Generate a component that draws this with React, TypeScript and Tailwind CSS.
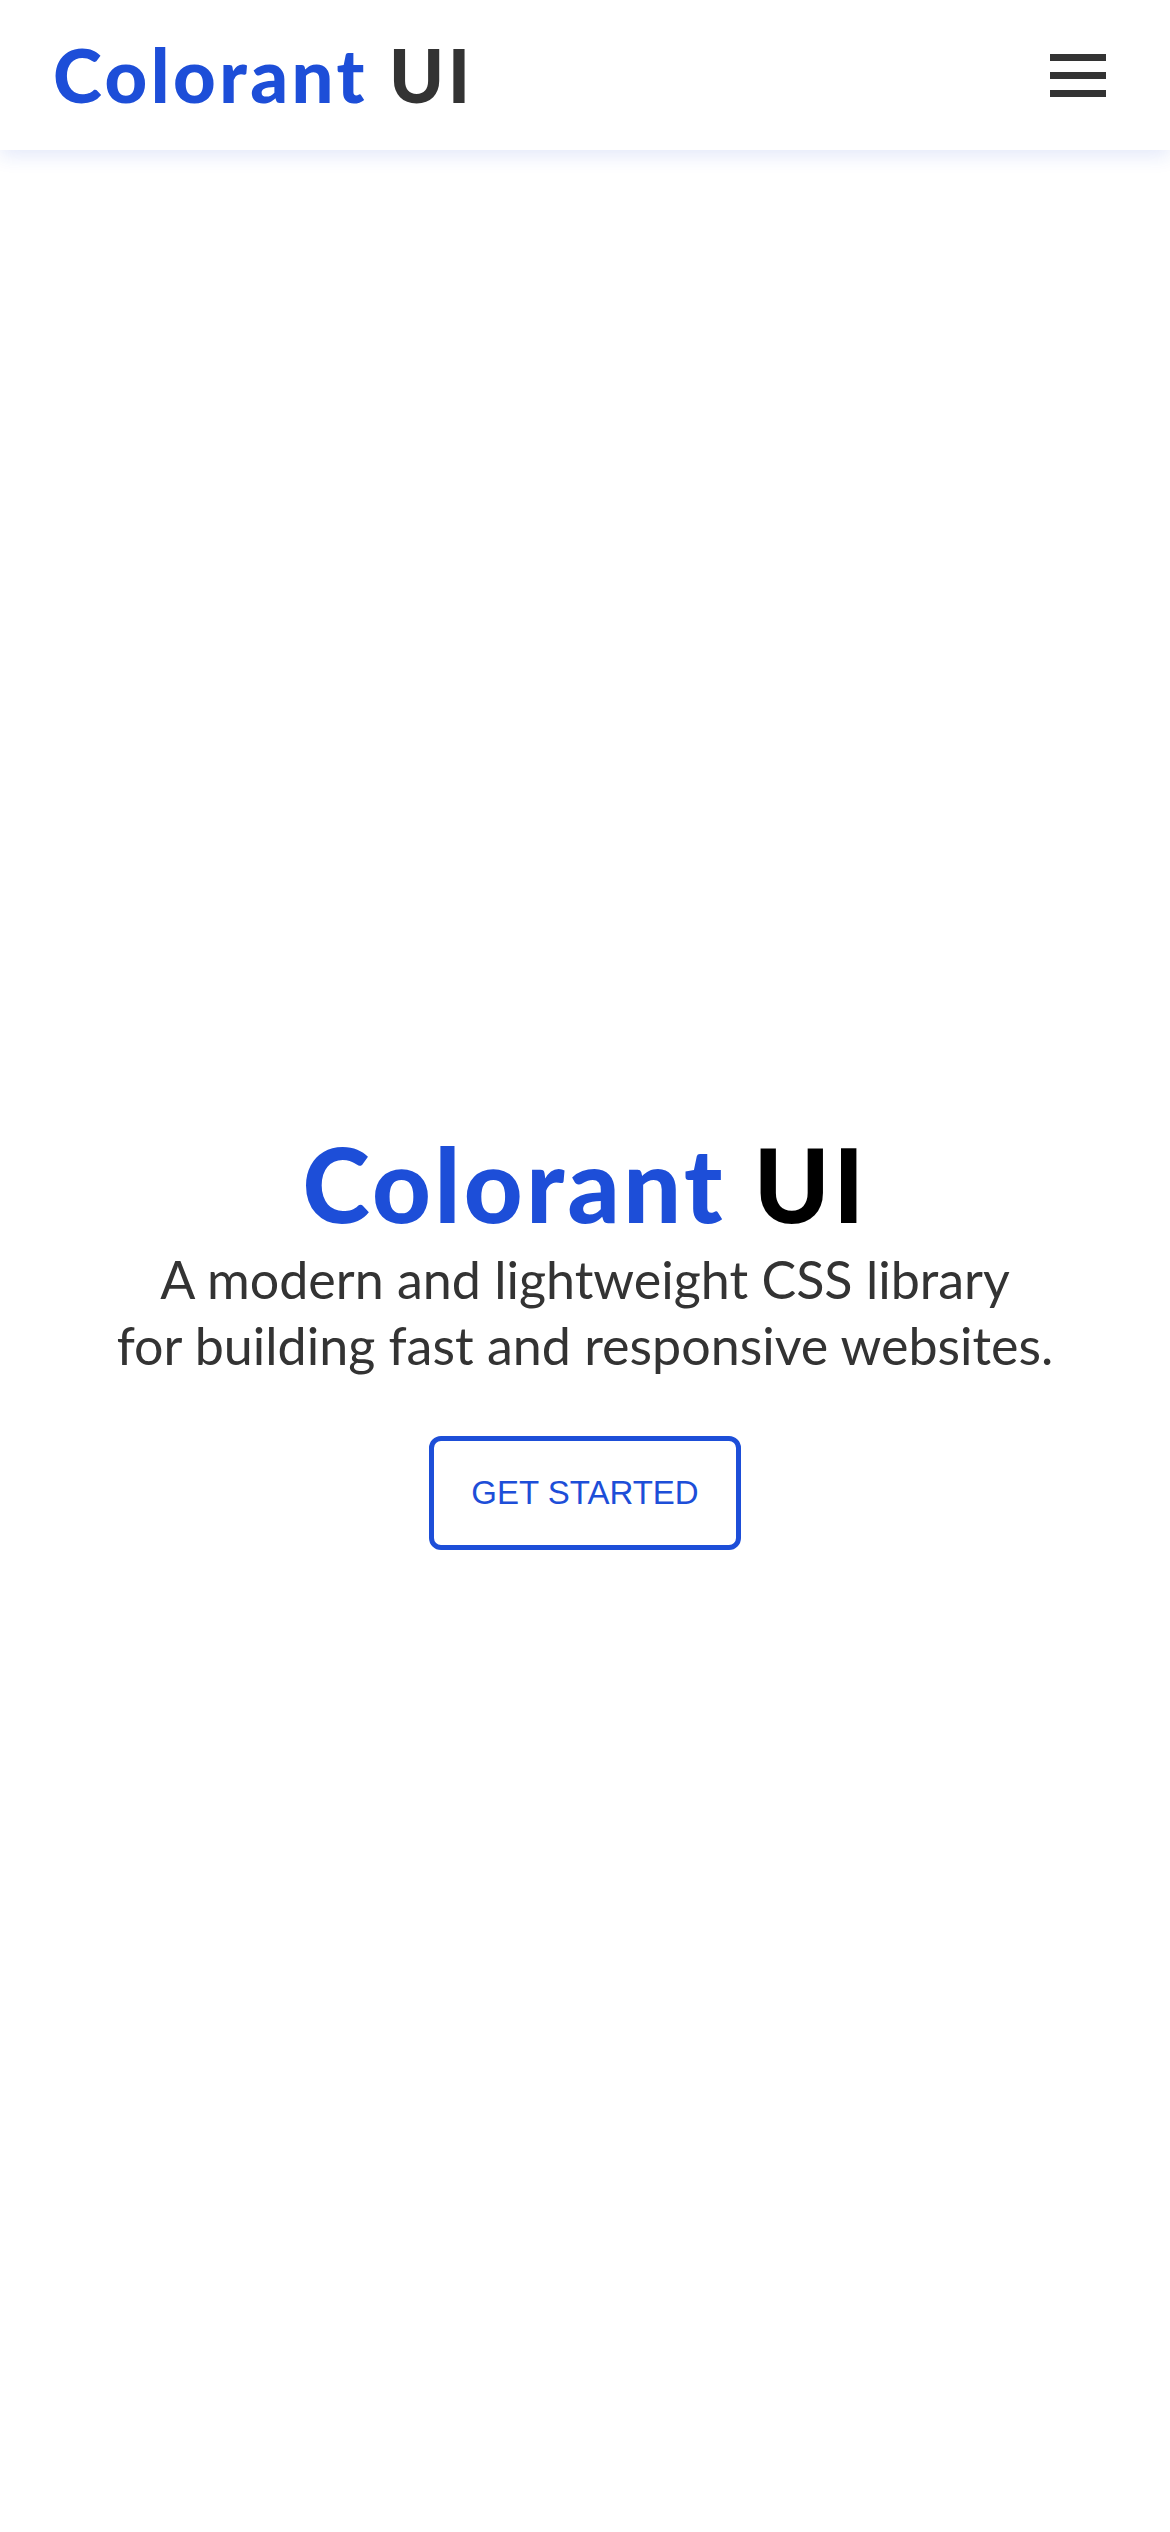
export default function App() {
  return (
    <div className="min-h-screen flex flex-col bg-white" style={{ fontFamily: "Lato, 'Noto Sans', sans-serif" }}>
      <header className="h-[150px] shrink-0 flex items-center justify-between pl-[53px] pr-[64px] shadow-[0_6px_18px_rgba(29,78,216,0.12)] relative z-10">
        <a href="/" className="text-[74px] font-black leading-none tracking-[3.5px]">
          <span className="text-[#1d4ed8]">Colorant</span> <span className="text-[#333333]">UI</span>
        </a>
        <button className="flex flex-col gap-[11px] w-[56px]">
          <span className="block h-[7px] bg-[#333333]" />
          <span className="block h-[7px] bg-[#333333]" />
          <span className="block h-[7px] bg-[#333333]" />
        </button>
      </header>
      <main className="flex-1 flex flex-col items-center justify-center text-center">
        <h1 className="text-[102px] font-black leading-none tracking-[3.5px]">
          <span className="text-[#1d4ed8]">Colorant</span> <span className="text-black">UI</span>
        </h1>
        <p className="mt-[11px] text-[52px] leading-[66px] text-[#333333]">
          A modern and lightweight CSS library
          <br />
          for building fast and responsive websites.
        </p>
        <a
          href="#"
          className="mt-[58px] w-[312px] h-[114px] flex items-center justify-center border-[5px] border-[#1d4ed8] rounded-[12px] text-[#1d4ed8] text-[33px]"
          style={{ fontFamily: "'Liberation Sans', Arial, sans-serif" }}
        >
          GET STARTED
        </a>
      </main>
    </div>
  );
}
